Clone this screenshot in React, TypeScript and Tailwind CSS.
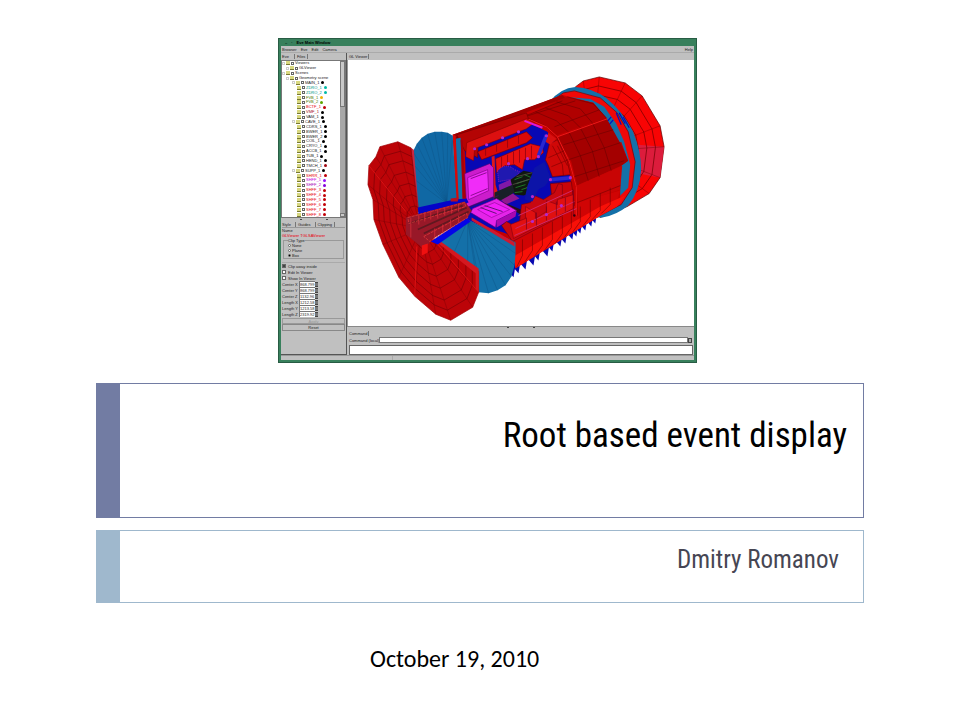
import React from 'react';

type Point = [number, number];

interface TreeItem {
  label: string;
  level: number;
  text?: string;
  dot?: string;
}

const treeItems: TreeItem[] = [
  { label: 'Viewers', level: 0 },
  { label: 'GLViewer', level: 1 },
  { label: 'Scenes', level: 0 },
  { label: 'Geometry scene', level: 1 },
  { label: 'MAIN_1', level: 2, dot: 'bg-black' },
  { label: 'ZDRO_1', level: 3, text: 'text-teal-600', dot: 'bg-teal-500' },
  { label: 'ZDRO_2', level: 3, text: 'text-teal-600', dot: 'bg-teal-500' },
  { label: 'FVB_1', level: 3, text: 'text-lime-700', dot: 'bg-yellow-500' },
  { label: 'FVB_2', level: 3, text: 'text-lime-700', dot: 'bg-lime-600' },
  { label: 'BCTF_1', level: 3, text: 'text-red-600', dot: 'bg-red-700' },
  { label: 'VMF_1', level: 3, text: 'text-red-800', dot: 'bg-black' },
  { label: 'VAM_1', level: 3, dot: 'bg-black' },
  { label: 'CAVE_1', level: 2, dot: 'bg-black' },
  { label: 'CDRS_1', level: 3, dot: 'bg-black' },
  { label: 'BWER_1', level: 3, dot: 'bg-black' },
  { label: 'BWER_2', level: 3, dot: 'bg-black' },
  { label: 'COIL_1', level: 3, dot: 'bg-black' },
  { label: 'CRYO_1', level: 3, dot: 'bg-black' },
  { label: 'ACCB_1', level: 3, dot: 'bg-black' },
  { label: 'TUB_1', level: 3, dot: 'bg-black' },
  { label: 'HEND_1', level: 3, dot: 'bg-black' },
  { label: 'TMCH_1', level: 3, dot: 'bg-red-800' },
  { label: 'SUPP_1', level: 2, dot: 'bg-black' },
  { label: 'SHRR_1', level: 3, text: 'text-red-600', dot: 'bg-red-700' },
  { label: 'SHFF_1', level: 3, text: 'text-fuchsia-600', dot: 'bg-purple-600' },
  { label: 'SHFF_2', level: 3, text: 'text-fuchsia-700', dot: 'bg-purple-700' },
  { label: 'SHFF_3', level: 3, text: 'text-red-600', dot: 'bg-red-700' },
  { label: 'SHFF_4', level: 3, text: 'text-red-600', dot: 'bg-red-700' },
  { label: 'SHFF_5', level: 3, text: 'text-red-600', dot: 'bg-red-700' },
  { label: 'SHFF_6', level: 3, text: 'text-red-600', dot: 'bg-red-700' },
  { label: 'SHFF_7', level: 3, text: 'text-red-600', dot: 'bg-red-700' },
  { label: 'SHFF_8', level: 3, text: 'text-red-600', dot: 'bg-red-700' },
];

const indents = ['pl-0', 'pl-1', 'pl-[10px]', 'pl-[15px]'];

const clipFields = [
  { label: 'Center X', value: '868.799' },
  { label: 'Center Y', value: '868.799' },
  { label: 'Center Z', value: '1132.96' },
  { label: 'Length X', value: '1212.58' },
  { label: 'Length Y', value: '1213.58' },
  { label: 'Length Z', value: '2319.92' },
];

// Detector geometry
const frontDisk: Point[] = [
  [410, 148], [397, 142], [379, 147], [375, 157], [368, 166], [367, 185], [372, 200], [373, 220],
  [382, 245], [398, 278], [414, 297], [435, 315], [450, 321], [472, 308], [478, 293], [478, 272],
];
const frontHub: Point = [420, 229];

const backDisk: Point[] = [
  [575, 87], [583, 81], [599, 77], [625, 83], [642, 96], [660, 126], [664, 147], [660, 178], [649, 194], [627, 207],
];
const backHub: Point = [592, 152];

const upperFan: Point[] = [[412, 152], [416, 144], [421, 138], [427, 134], [434, 132], [441, 132], [447, 133], [452, 136]];
const lowerFan: Point[] = [[478, 293], [488, 294], [497, 291], [505, 286], [511, 277], [514, 266], [515, 254], [515, 243]];

// Tips of the support feet under the barrel
const feet: Point[] = [
  [513, 278], [518, 274], [525, 270], [533, 266], [538, 261], [547, 257], [552, 252], [560, 247],
  [565, 244], [572, 240], [576, 237], [580, 234], [585, 231], [591, 227], [595, 224],
];

const toPoints = (points: Point[]) => points.map((p) => p.join(',')).join(' ');

const shrink = (points: Point[], hub: Point, k: number): Point[] =>
  points.map(([x, y]) => [hub[0] + (x - hub[0]) * k, hub[1] + (y - hub[1]) * k]);

interface RaysProps {
  hub: Point;
  points: Point[];
  stroke: string;
}

const Rays: React.FC<RaysProps> = ({ hub, points, stroke }) => (
  <g stroke={stroke} strokeWidth="0.4">
    {points.map(([x, y]) => (
      <line key={`${x}-${y}`} x1={hub[0]} y1={hub[1]} x2={x} y2={y} />
    ))}
  </g>
);

const Detector: React.FC = () => (
  <svg viewBox="347 60 347 267" className="block w-full" role="img" aria-label="Detector geometry">
    {/* back disk */}
    <polygon points={`${toPoints(backDisk)} 600,218 590,150`} fill="#f80404" stroke="#5c0000" strokeWidth="0.7" />
    <polygon points="638,145 664,147 660,178 640,174" fill="#dc1c3c" />
    {[0.64, 0.76, 0.88].map((k) => (
      <polyline key={k} points={toPoints(shrink(backDisk, backHub, k))} fill="none" stroke="#6c0000" strokeWidth="0.7" />
    ))}
    <Rays hub={backHub} points={backDisk} stroke="#6c0000" />

    {/* rings round the far end */}
    <path d="M549 102Q560 88 575 87Q592 88 606 98Q623 112 633 132Q641 152 641 170Q640 191 628 206Q616 216 602 218L597 218L598 100Z" fill="#1470a8" />
    <path d="M553 100L563 93L574 91L600 98L617 113L628 132L635 162L632 188L621 205L596 218L590 150L565 98Z" fill="#f00808" stroke="#7c0000" strokeWidth="0.7" />
    <path d="M568 97L590 99L604 107L616 124L624 142L630 165L628 188L614 202L575 150Z" fill="#1470a8" />
    <path d="M616 113L621 125M619 113L625 124M623 117L629 128M604 125L611 117M607 127L613 120" stroke="#0010c0" strokeWidth="1.2" />

    {/* blue feet */}
    {feet.map(([x, y]) => (
      <polygon key={x} points={`${x},${y} ${x - 6},${y - 7} ${x - 3},${y - 14} ${x + 2},${y - 12}`} fill="#0808b0" />
    ))}

    {/* barrel */}
    <path d="M452 135L520 111L562 95L593 103L606 118L609 130L616 145L621 142L628 161L621 166L620 187L620 199L597 218L515 268L512 242L468 221L455 205Z" fill="#c40000" />
    <path d="M452 135L562 95L565 98L500 122L454 140Z" fill="#a00000" />
    <path d="M524 117L566 97L593 103L606 118L555 136L545 126Z" fill="#b00000" />
    <path d="M556 137L606 118L621 145L628 161L621 166L577 186L571 162Z" fill="#a40000" />
    <path d="M576 186L622 166L620 190L577 205Z" fill="#c80404" />
    <path d="M512 240L577 203L620 191L617 201L597 218L515 268Z" fill="#d00404" />
    <path d="M513 257L600 207L625 196L617 207L597 218L515 269Z" fill="#f81008" />
    <g stroke="#600000" strokeWidth="0.5" fill="none">
      <path d="M524 117L545 126L556 137L568 160L576 186L577 216M535 112L556 121L569 133L580 156L588 181M545 108L568 116L580 128L592 151L599 177M556 102L580 109L592 123L604 148L611 171M567 97L593 104L606 118" />
      <path d="M453 139L530 114L562 101M467 139L524 117L575 101M554 127L599 110M563 145L613 130M568 160L620 143M574 177L624 161M577 203L620 186" />
      <path d="M513 246L513 267M522 240V256L516 268M532 234V251L524 263M542 228V246L534 257M552 222V240L544 251M562 217V234L554 245M571 212V228L563 239M580 207V222L572 233M590 200V217L582 227M600 194V211L591 221M610 188V205L601 214" />
    </g>
    <path d="M525 118L546 127L557 137L569 162L576 187L576 216M557 137L607 119" stroke="#f01818" strokeWidth="1" fill="none" />

    {/* open interior */}
    <path d="M464 149L526 122L547 132L558 148L569 173L574 204L512 236L467 221Z" fill="#0808b4" />
    <path d="M456 135L526 113L528 119L478 139L477 158L464 151Z" fill="#b40404" stroke="#600000" strokeWidth="0.5" />
    <path d="M466 143L526 119L534 123L526 129L474 149L473 161L465 157Z" fill="#dc1010" stroke="#780000" strokeWidth="0.5" />
    <path d="M477 152L526 132L532 138L526 143L481 160Z" fill="#d80808" stroke="#700000" strokeWidth="0.6" />
    <path d="M495 159L530 144L542 147L543 153L534 160L524 160L522 170L514 165L504 166L496 173Z" fill="#e81010" stroke="#780000" strokeWidth="0.6" />
    <path d="M549 144L557 140L567 162L570 175L552 177L548 166L545 160Z" fill="#d00808" stroke="#700000" strokeWidth="0.6" />
    <path d="M550 184L571 182L574 206L553 216Z" fill="#c80408" stroke="#700000" strokeWidth="0.6" />
    <path d="M548 133L556 139L550 145L545 142Z" fill="#d81010" />
    <path d="M552 146L562 165L563 176M557 146L567 166M548 158L564 151M551 167L568 160" stroke="#780000" strokeWidth="0.6" fill="none" />
    <path d="M492 159L493 192M501 157V168M507 155V166M513 152V164M519 150V163M525 148V160M531 146V159M485 148V156M496 144V152M507 140V148M518 136V144" stroke="#900010" strokeWidth="0.8" />
    <path d="M491 157L494 156L495 185L498 195L493 199Z" fill="#e01818" />
    <path d="M455 139L460 138L462 201L456 203Z" fill="#1470a8" />
    <path d="M452 135L455 136L458 200L462 206L456 207Z" fill="#d80808" />
    <path d="M460 140L462 141L465 198L462 199Z" fill="#a80008" />

    <path d="M498 185L514 178L515 188L500 199Z" fill="#8018a8" />
    <path d="M499 199L511 193L519 199L505 205Z" fill="#901890" />
    <path d="M497 171Q505 162 514 170L519 172L515 179L498 182Z" fill="#2018b0" stroke="#c020b8" strokeWidth="0.7" strokeDasharray="1 1" />
    <path d="M510 180L523 171L533 173L537 184L535 192L523 196L514 195Z" fill="#101810" />
    <path d="M514 180L522 177M516 184L528 180M515 188L525 185M521 190L533 186M524 175L531 178M514 193L522 192" stroke="#24a030" strokeWidth="0.7" />
    <path d="M516 177L532 173M512 185L534 178M526 188L536 184" stroke="#585048" strokeWidth="0.8" />
    <path d="M494 193L512 185L514 193L498 202L494 200Z" fill="#182028" />
    <path d="M498 201L523 211L536 222L532 222L515 212Z" fill="#281018" />

    {/* magenta crystal boxes */}
    <path d="M464 174L489 164L493 168L493 197L466 208Z" fill="#cc1ccc" stroke="#600070" strokeWidth="0.6" />
    <path d="M467 178L487 170L488 191L468 200Z" fill="#f02cf8" stroke="#780080" strokeWidth="0.6" />
    <path d="M470 179L486 173M470 196L487 189" stroke="#600060" strokeWidth="0.7" />
    <path d="M472 209L496 199L516 211L496 221L495 228L470 213Z" fill="#e424e8" stroke="#600070" strokeWidth="0.6" />
    <path d="M477 210L494 203L509 210L491 218Z" fill="#f020f8" stroke="#780080" strokeWidth="0.5" />
    <path d="M496 221L516 211L515 217L496 228Z" fill="#a808b0" />
    <path d="M480 208L496 214M484 206L502 212M463 210L498 196" stroke="#401058" strokeWidth="0.8" />

    {/* lower inner blocks */}
    <path d="M501 226L506 222L513 226L518 231L521 205L530 203L534 196L543 200L554 193L558 184L562 185L562 216L512 242Z" fill="#c80810" stroke="#700010" strokeWidth="0.6" />
    <path d="M510 225L525 219V207L535 213V219L546 212V201L557 205V200L573 195V209L513 239Z" fill="#e01010" stroke="#800010" strokeWidth="0.6" />
    <path d="M515 229L574 202M518 216L572 191M514 236L576 209" stroke="#d02868" strokeWidth="1" />
    <path d="M526 218V230M536 213V226M546 207V221M556 202V216M565 198V212M573 190V216" stroke="#740020" strokeWidth="0.7" />

    {/* dark blue brackets */}
    <path d="M527 186L534 168L544 162L547 170L550 178L545 186L538 190L532 202L524 200Z" fill="#0c14a8" />
    <path d="M546 135L538 156" stroke="#2828d0" strokeWidth="3.5" />
    <path d="M550 180L571 178" stroke="#2828d0" strokeWidth="3.5" />
    <path d="M524 121L542 128" stroke="#e018d8" strokeWidth="2" />
    {[[546, 136], [538, 157], [550, 180], [570, 178], [474, 149], [486, 145], [502, 138], [518, 132], [508, 164], [527, 159], [532, 197], [532, 222], [546, 215], [561, 206]].map(([x, y]) => (
      <circle key={`${x}-${y}`} cx={x} cy={y} r="1.6" fill="#b428cc" />
    ))}
    <circle cx="574" cy="216" r="1.2" fill="#300010" />

    {/* front fans */}
    <polygon points={`${toPoints(upperFan)} 456,202 417,213`} fill="#1068a4" />
    <Rays hub={[446, 204]} points={[...upperFan, [413, 165], [414, 180]]} stroke="#0c5084" />
    <path d="M410 148L413 150L418 212L414 214Z" fill="#c82840" />
    <polygon points={`${toPoints(lowerFan)} 467,220 434,243 478,272`} fill="#1470a8" />
    <Rays hub={[467, 221]} points={[...lowerFan, [478, 280], [467, 264], [453, 254]]} stroke="#0c5084" />
    <path d="M471 218L514 243L514 247L471 221Z" fill="#d01830" />

    {/* front disk */}
    <polygon points={`${toPoints(frontDisk)} 433,240 417,213`} fill="#bc0408" stroke="#a00004" strokeWidth="0.7" />
    {[0.26, 0.39, 0.52, 0.65, 0.78, 0.89].map((k) => (
      <polyline key={k} points={toPoints(shrink(frontDisk, frontHub, k))} fill="none" stroke="#600004" strokeWidth="0.5" />
    ))}
    <Rays hub={frontHub} points={frontDisk} stroke="#780004" />
    <path d="M368 166L405 212M416 247L414 297M433 240L478 293" stroke="#f01818" strokeWidth="0.7" />
    <path d="M433 240L437 240L478 269V293L475 290V274Z" fill="#d41820" />

    {/* beam sector between the fans */}
    <path d="M417 208L454 200L466 199L468 203L418 217Z" fill="#0404c8" />
    <path d="M430 242L466 218L470 222L437 245Z" fill="#0404e8" />
    <path d="M405 218L464 202L471 211L467 218L431 240L424 250L405 235Z" fill="#981828" />
    <path d="M417 230L466 208M423 234L468 212M408 224L462 206" stroke="#601820" strokeWidth="1.8" />
    <path d="M407 218L464 203L465 207L408 224ZM423 237L466 214L467 218L429 242Z" fill="none" stroke="#e03838" strokeWidth="0.8" strokeDasharray="3 1" />
    <path d="M418 215V225M424 213V222M430 211V220M437 210V219M444 208V216M451 206V214M458 204V212M410 218V238M434 229V238M442 225V233M450 220V228M458 216V224" stroke="#d02c38" strokeWidth="0.9" />
    <path d="M421 246L427 244V253L421 256Z" fill="#f01010" />
    <path d="M450 199L458 198L457 202L450 202Z" fill="#b81020" />
  </svg>
);

const ObjectTree: React.FC = () => (
  <div className="flex h-[158px] border border-[#777] bg-white">
    <ul className="flex min-w-0 flex-1 flex-col overflow-hidden">
      {treeItems.map((item, index) => (
        <li key={index} className={`flex min-h-0 flex-1 items-center gap-px ${indents[item.level]}`}>
          {item.level < 3 && <span className="h-[3px] w-[3px] shrink-0 border border-[#ccc]" />}
          <span className="h-1 w-1 shrink-0 border-b border-[#777733] bg-[#d8d880]" />
          <span className="h-[3px] w-[3px] shrink-0 border border-[#666] bg-white" />
          <span className={`whitespace-nowrap text-[4px] leading-[4px] ${item.text ?? 'text-[#222]'}`}>{item.label}</span>
          {item.dot && <span className={`ml-px h-[3px] w-[3px] shrink-0 rounded-full ${item.dot}`} />}
        </li>
      ))}
    </ul>
    <div className="flex w-[5px] flex-col justify-between bg-[#a8a8a8]">
      <div className="h-[46px] border border-[#777] bg-[#c8c8c8]" />
      <div className="h-1 border border-[#777] bg-[#c8c8c8]" />
    </div>
  </div>
);

const ClippingPanel: React.FC = () => (
  <div className="flex flex-1 flex-col px-px text-[4px]">
    <div className="flex h-[7px] items-center gap-1 border-b border-[#999]">
      <button type="button">Style</button>
      <button type="button" className="border-l border-[#777] pl-[2px]">Guides</button>
      <button type="button" className="border-x border-[#777] px-[2px]">Clipping</button>
    </div>
    <p className="leading-[5px]">Name</p>
    <p className="whitespace-nowrap leading-[5px] text-red-600">GLViewer TGLSAViewer</p>
    <fieldset className="mx-px h-[21px] border border-[#999] pl-1">
      <legend className="leading-[5px]">Clip Type</legend>
      {['None', 'Plane', 'Box'].map((name) => (
        <label key={name} className="flex h-[5px] items-center gap-px leading-[4px]">
          <input type="radio" name="clip" defaultChecked={name === 'Box'} className="h-[3px] w-[3px] appearance-none rounded-full border border-[#666] bg-white checked:bg-black" />
          {name}
        </label>
      ))}
    </fieldset>
    <div className="mt-[3px] border-t border-[#aaa]">
      {['Clip away inside', 'Edit In Viewer', 'Show In Viewer'].map((name, index) => (
        <label key={name} className="flex h-[6px] items-center gap-[2px]">
          <input type="checkbox" defaultChecked={index === 0} className="h-1 w-1 appearance-none border border-[#666] bg-white checked:bg-[#444]" />
          {name}
        </label>
      ))}
    </div>
    {clipFields.map((field) => (
      <label key={field.label} className="flex h-[6px] items-center">
        <span className="w-[17px] whitespace-nowrap">{field.label}</span>
        <input type="text" defaultValue={field.value} className="h-[6px] w-4 border-t border-l border-[#777] bg-white text-[4px] leading-[4px]" />
        <span className="h-[5px] w-[3px] border-y border-[#444] bg-[#777]" />
      </label>
    ))}
    <button type="button" disabled className="mt-px h-[6px] border border-[#999] text-[#999]">Apply</button>
    <button type="button" className="h-[7px] border border-[#888]">Reset</button>
  </div>
);

const EveWindow: React.FC = () => (
  <section className="flex w-full max-w-[419px] flex-col border-x-3 border-b-3 border-[#38805c] bg-[#c0c0c0] font-['Liberation_Sans',Arial,sans-serif] text-[4px] leading-[5px] text-[#222] outline-1 -outline-offset-1 outline-[#285c44]">
    <header className="flex h-2 items-center gap-1 border-t border-[#285c44] bg-[#38805c] pl-1 font-bold text-black">
      <span>–</span>
      <span>·</span>
      <span>Eve Main Window</span>
    </header>
    <nav className="flex h-[7px] items-center gap-1 border-b border-[#aaa] px-px">
      <button type="button">Browser</button>
      <button type="button">Eve</button>
      <button type="button">Edit</button>
      <button type="button">Camera</button>
      <button type="button" className="ml-auto">Help</button>
    </nav>
    <div className="flex">
      <aside className="flex w-[66px] shrink-0 flex-col border-r border-b border-[#555]">
        <div className="flex h-[7px] items-center gap-1 pl-px">
          <button type="button" className="pr-px">Eve</button>
          <button type="button" className="border-x border-[#777] px-[2px]">Files</button>
        </div>
        <ObjectTree />
        <div className="flex h-[3px] items-center justify-center gap-6">
          <span className="h-px w-[2px] bg-[#444]" />
          <span className="h-px w-[2px] bg-[#444]" />
        </div>
        <ClippingPanel />
      </aside>
      <main className="min-w-0 flex-1">
        <div className="flex h-[7px] items-center pl-[2px]">
          <button type="button" className="border-r border-[#777] pr-px">GL Viewer</button>
        </div>
        <div className="border-l border-[#999] bg-white">
          <Detector />
        </div>
        <div className="flex h-1 items-start justify-center gap-6 border-t border-[#888]">
          <span className="h-px w-[2px] bg-[#444]" />
          <span className="h-px w-[2px] bg-[#444]" />
        </div>
        <div className="flex h-[6px] items-center pl-[2px]">
          <button type="button" className="border-r border-[#777] pr-px">Command</button>
        </div>
        <div className="flex h-2 items-center pr-[2px] pl-[2px]">
          <label htmlFor="command" className="w-[30px] whitespace-nowrap">Command (local):</label>
          <select id="command" className="h-[6px] min-w-0 flex-1 appearance-none border border-[#777] bg-white" />
          <span className="h-[5px] w-1 border border-[#444] bg-[#aaa]" />
        </div>
        <div className="mt-px mr-px ml-[2px] h-[10px] border border-[#666] bg-white" />
      </main>
    </div>
    <footer className="flex h-[5px] border-t border-[#999]">
      <span className="w-[27%] border-r border-[#aaa]" />
    </footer>
  </section>
);

const App: React.FC = () => {
  return (
    <div className="min-h-screen bg-white px-[10%] pt-[38px] pb-10">
      <div className="pl-[182px]">
        <EveWindow />
      </div>

      <div className="mt-5 flex h-[135px] border border-[#727ca3]">
        <div className="w-[23px] bg-[#727ca3]" />
        <h1 className="flex-1 pt-[30px] pr-4 text-right font-['Roboto_Condensed','Liberation_Sans_Narrow',sans-serif] text-[35px] leading-[44px] text-black">
          Root based event display
        </h1>
      </div>

      <div className="mt-3 flex h-[73px] border border-[#9fb8cd]">
        <div className="w-[23px] bg-[#9fb8cd]" />
        <p className="flex-1 pt-[14px] pr-6 text-right font-['Roboto_Condensed','Liberation_Sans_Narrow',sans-serif] text-[25px] leading-[30px] text-[#464653]">
          Dmitry Romanov
        </p>
      </div>

      <p className="mt-11 pl-[274px] font-['Carlito','Lato',sans-serif] text-[24px] leading-6 text-black">
        October 19, 2010
      </p>
    </div>
  );
};

export default App;
